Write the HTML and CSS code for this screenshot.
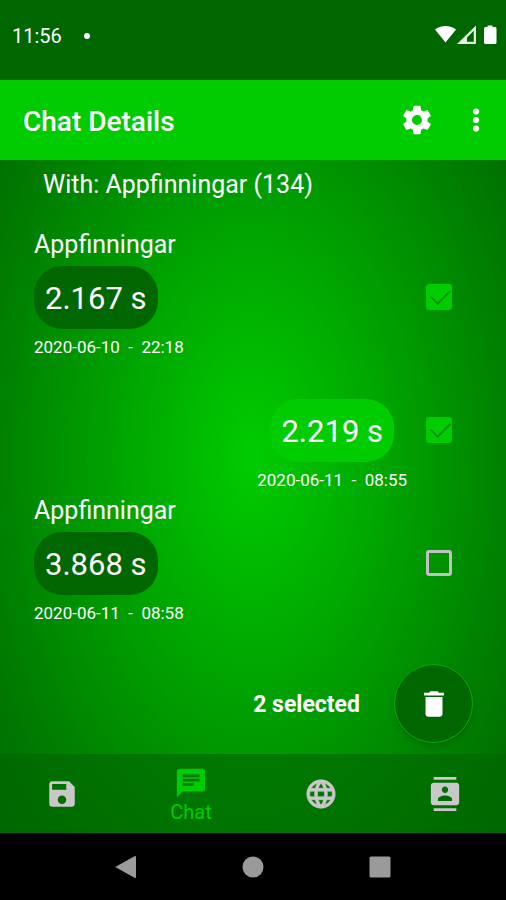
FILE: index.html
```html
<!DOCTYPE html>
<html lang="en">
<head>
    <meta charset="UTF-8">
    <meta name="viewport" content="width=device-width, initial-scale=1.0">
    <title>Chat Details</title>
    <link rel="stylesheet" href="styles.css">
</head>
<body>

    <div class="status-bar">
        <span class="clock">11:56</span>
        <span class="status-dot"></span>
        <svg class="status-icons" viewBox="0 0 64 22" width="64" height="22" fill="#fff">
            <path d="M1 4.500C6.500 -0.200 16.500 -0.200 22 4.500L11.500 17.500Z"/>
            <path fill-rule="evenodd" opacity="0.9" d="M23 19L42 0.500V19ZM33 16.800H39.800V5.800L33 12.500Z"/>
            <path d="M53.500 0.500h5v1.500h2.500a1.500 1.500 0 0 1 1.500 1.500v14a1.500 1.500 0 0 1-1.500 1.500h-9.500a1.500 1.500 0 0 1-1.500-1.500v-14a1.500 1.500 0 0 1 1.500-1.500h2z"/>
        </svg>
    </div>

    <header class="toolbar">
        <h1>Chat Details</h1>
        <button type="button" class="icon-button" aria-label="Settings">
            <svg viewBox="0 0 24 24"><path d="M19.430 12.980c.04-.32.070-.64.070-.98s-.03-.66-.07-.98l2.110-1.650c.19-.15.240-.42.120-.64l-2-3.460c-.12-.22-.39-.3-.61-.22l-2.490 1c-.52-.4-1.080-.73-1.690-.98l-.38-2.650C14.460 2.180 14.250 2 14 2h-4c-.25 0-.46.180-.49.420l-.38 2.650c-.61.250-1.170.59-1.690.98l-2.490-1c-.23-.09-.49 0-.61.220l-2 3.460c-.13.220-.07.490.120.640l2.110 1.650c-.04.320-.07.650-.07.980s.03.660.070.980l-2.110 1.650c-.19.150-.24.420-.12.640l2 3.460c.12.220.39.300.610.220l2.490-1c.52.400 1.080.730 1.690.980l.38 2.650c.03.240.240.420.490.420h4c.25 0 .46-.18.490-.42l.38-2.650c.61-.25 1.170-.59 1.690-.98l2.490 1c.23.090.490 0 .61-.22l2-3.460c.12-.22.070-.49-.12-.64l-2.110-1.650zM12 15.500c-1.930 0-3.500-1.570-3.500-3.500s1.570-3.500 3.500-3.500 3.500 1.570 3.500 3.500-1.570 3.500-3.500 3.500z"/></svg>
        </button>
        <button type="button" class="icon-button" aria-label="More options">
            <svg viewBox="0 0 24 24"><circle cx="12" cy="6" r="2.200"/><circle cx="12" cy="12" r="2.200"/><circle cx="12" cy="18" r="2.200"/></svg>
        </button>
    </header>

    <div class="screen">
        <main>
            <h2 class="chat-with">With: Appfinningar (134)</h2>

            <ul class="messages">
                <li class="message">
                    <label class="message-body" for="message1">
                        <span class="sender">Appfinningar</span>
                        <span class="bubble">2.167 s</span>
                        <span class="date">2020-06-10&nbsp; -&nbsp; 22:18</span>
                    </label>
                    <input type="checkbox" id="message1" checked>
                </li>
                <li class="message sent">
                    <label class="message-body" for="message2">
                        <span class="sender"></span>
                        <span class="bubble">2.219 s</span>
                        <span class="date">2020-06-11&nbsp; -&nbsp; 08:55</span>
                    </label>
                    <input type="checkbox" id="message2" checked>
                </li>
                <li class="message">
                    <label class="message-body" for="message3">
                        <span class="sender">Appfinningar</span>
                        <span class="bubble">3.868 s</span>
                        <span class="date">2020-06-11&nbsp; -&nbsp; 08:58</span>
                    </label>
                    <input type="checkbox" id="message3">
                </li>
            </ul>

            <div class="selection">
                <span class="selected-count">2 selected</span>
                <button type="button" class="delete-button" aria-label="Delete selected">
                    <svg viewBox="0 0 24 24"><path d="M6 19c0 1.100.9 2 2 2h8c1.100 0 2-.9 2-2V7H6v12zM19 4h-3.500l-1-1h-5l-1 1H5v2h14V4z"/></svg>
                </button>
            </div>
        </main>

        <nav class="tabs">
            <a href="#saved" aria-label="Saved">
                <svg viewBox="0 0 24 24"><path d="M17 3H5c-1.110 0-2 .9-2 2v14c0 1.100.89 2 2 2h14c1.100 0 2-.9 2-2V7l-4-4zm-5 16c-1.660 0-3-1.340-3-3s1.340-3 3-3 3 1.340 3 3-1.340 3-3 3zm3-10H5V5h10v4z"/></svg>
            </a>
            <a href="#chat" class="active">
                <svg viewBox="0 0 24 24"><path d="M20 2H4c-1.100 0-1.990.9-1.990 2L2 22l4-4h14c1.100 0 2-.9 2-2V4c0-1.100-.9-2-2-2zM6 9h12v2H6V9zm8 5H6v-2h8v2zm4-6H6V6h12v2z"/></svg>
                <span>Chat</span>
            </a>
            <a href="#web" aria-label="Web">
                <svg viewBox="0 0 24 24"><path d="M11.990 2C6.470 2 2 6.480 2 12s4.470 10 9.990 10C17.520 22 22 17.520 22 12S17.520 2 11.990 2zm6.930 6h-2.950c-.32-1.250-.78-2.450-1.380-3.560 1.840.63 3.370 1.910 4.330 3.560zM12 4.040c.83 1.200 1.480 2.530 1.910 3.960h-3.820c.43-1.430 1.080-2.760 1.910-3.960zM4.260 14C4.100 13.360 4 12.690 4 12s.1-1.360.26-2h3.380c-.08.660-.14 1.320-.14 2s.06 1.340.14 2H4.260zm.82 2h2.950c.32 1.250.780 2.450 1.380 3.560-1.840-.63-3.370-1.900-4.330-3.560zm2.950-8H5.080c.96-1.660 2.490-2.930 4.330-3.560C8.810 5.550 8.350 6.750 8.030 8zM12 19.960c-.83-1.200-1.480-2.530-1.910-3.960h3.820c-.43 1.430-1.080 2.760-1.910 3.960zM14.340 14H9.660c-.09-.66-.16-1.320-.16-2s.07-1.350.16-2h4.680c.09.650.160 1.320.16 2s-.07 1.340-.16 2zm.25 5.560c.6-1.110 1.060-2.310 1.380-3.560h2.950c-.96 1.650-2.490 2.930-4.330 3.560zM16.360 14c.08-.66.140-1.320.14-2s-.06-1.340-.14-2h3.380c.16.640.26 1.310.26 2s-.1 1.360-.26 2h-3.380z" stroke="currentColor" stroke-width="0.500"/></svg>
            </a>
            <a href="#contacts" aria-label="Contacts">
                <svg viewBox="0 0 24 24"><path d="M20 0H4v2h16V0zM4 24h16v-2H4v2zM20 4H4c-1.100 0-2 .9-2 2v12c0 1.100.9 2 2 2h16c1.100 0 2-.9 2-2V6c0-1.100-.9-2-2-2zm-8 2.750c1.240 0 2.250 1.010 2.250 2.250s-1.010 2.250-2.250 2.250S9.750 10.240 9.750 9 10.760 6.750 12 6.750zM17 17H7v-1.500c0-1.670 3.330-2.500 5-2.500s5 .83 5 2.500V17z"/></svg>
            </a>
        </nav>
    </div>

    <footer class="system-bar">
        <button type="button" aria-label="Back">
            <svg viewBox="0 0 24 24"><path d="M1.200 12L20.500 1.300Q22 0.500 22 2V22Q22 23.500 20.500 22.700Z"/></svg>
        </button>
        <button type="button" aria-label="Home">
            <svg viewBox="0 0 24 24"><circle cx="12" cy="12" r="10.500"/></svg>
        </button>
        <button type="button" aria-label="Overview">
            <svg viewBox="0 0 24 24"><rect x="1.500" y="1.500" width="21" height="21" rx="1.500"/></svg>
        </button>
    </footer>

</body>
</html>
```

FILE: styles.css
```css
* {
    box-sizing: border-box;
}

body {
    font-family: Roboto, "Liberation Sans", sans-serif;
    background-color: #000;
    color: #fff;
    margin: 0;
    min-height: 100vh;
    display: flex;
    flex-direction: column;
}

h1, h2, ul {
    margin: 0;
    padding: 0;
}

button {
    background: none;
    border: none;
    padding: 0;
    display: flex;
    align-items: center;
    justify-content: center;
}

.status-bar {
    display: flex;
    align-items: center;
    height: 80px;
    padding: 0 8px 8px 12px;
    background-color: #006600;
    font-size: 20px;
}

.status-dot {
    width: 6px;
    height: 6px;
    margin-left: 22px;
    border-radius: 50%;
    background-color: #fff;
}

.status-icons {
    margin-left: auto;
}

.toolbar {
    display: flex;
    align-items: center;
    height: 80px;
    padding: 0 1px 0 23px;
    background-color: #00cc00;
}

.toolbar h1 {
    flex: 1;
    padding-top: 2px;
    font-size: 28px;
    font-weight: 500;
}

.icon-button {
    width: 59px;
    height: 59px;
    color: #fff;
}

.icon-button svg,
.delete-button svg,
.tabs svg {
    width: 34px;
    height: 34px;
    fill: currentColor;
}

.screen {
    flex: 1;
    display: flex;
    flex-direction: column;
    background: radial-gradient(ellipse 345px 575px at 50% 44%, #00cc00, #006600);
}

main {
    flex: 1;
    display: flex;
    flex-direction: column;
    padding: 9px 33px 11px 34px;
}

.chat-with {
    padding: 0 9px;
    font-size: 25px;
    font-weight: 400;
    line-height: 32px;
}

.messages {
    list-style: none;
    margin-top: 28px;
}

.message {
    display: flex;
    align-items: center;
}

.message-body {
    flex: 1;
    display: flex;
    flex-direction: column;
    align-items: flex-start;
    height: 133px;
}

.sender {
    height: 37px;
    font-size: 25px;
    line-height: 32px;
}

.bubble {
    padding: 2px 11px 0;
    border-radius: 28px;
    background-color: #006600;
    font-size: 31px;
    line-height: 61px;
}

.date {
    margin-top: 8px;
    font-size: 17px;
    line-height: 20px;
}

.sent .message-body {
    align-items: flex-end;
    padding-right: 19px;
}

.sent .bubble {
    margin-right: 13px;
    background-color: #00cc00;
}

.message input {
    appearance: none;
    width: 26px;
    height: 26px;
    margin: 3px 21px 0 0;
    border: 3px solid #c0c0c0;
    border-radius: 3px;
}

.message input:checked {
    position: relative;
    border: none;
    background-color: #00cc00;
}

.message input:checked::after {
    content: "";
    position: absolute;
    left: 9px;
    top: 1px;
    width: 9px;
    height: 17px;
    border: solid #009000;
    border-width: 0 2px 2px 0;
    transform: rotate(45deg);
}

.selection {
    display: flex;
    align-items: center;
    justify-content: flex-end;
    gap: 34px;
    margin-top: auto;
}

.selected-count {
    padding-top: 2px;
    font-size: 23px;
    font-weight: 700;
}

.delete-button {
    width: 79px;
    height: 79px;
    border: 1px solid #00b000;
    border-radius: 50%;
    background-color: #006600;
    color: #fff;
    box-shadow: 0 3px 6px rgba(0, 0, 0, 0.2);
}

.tabs {
    display: grid;
    grid-template-columns: 124fr 134fr 126fr 122fr;
    height: 79px;
    background-color: rgba(0, 102, 0, 0.6);
}

.tabs a {
    display: flex;
    flex-direction: column;
    align-items: center;
    justify-content: center;
    color: #c8c8c8;
    font-size: 20px;
    line-height: 24px;
    text-decoration: none;
}

.tabs .active {
    padding-top: 2px;
    color: #00cc00;
}

.system-bar {
    display: flex;
    align-items: center;
    justify-content: center;
    gap: 103px;
    height: 67px;
    background-color: #000;
}

.system-bar svg {
    width: 24px;
    height: 24px;
    fill: #9a9a9a;
}
```
